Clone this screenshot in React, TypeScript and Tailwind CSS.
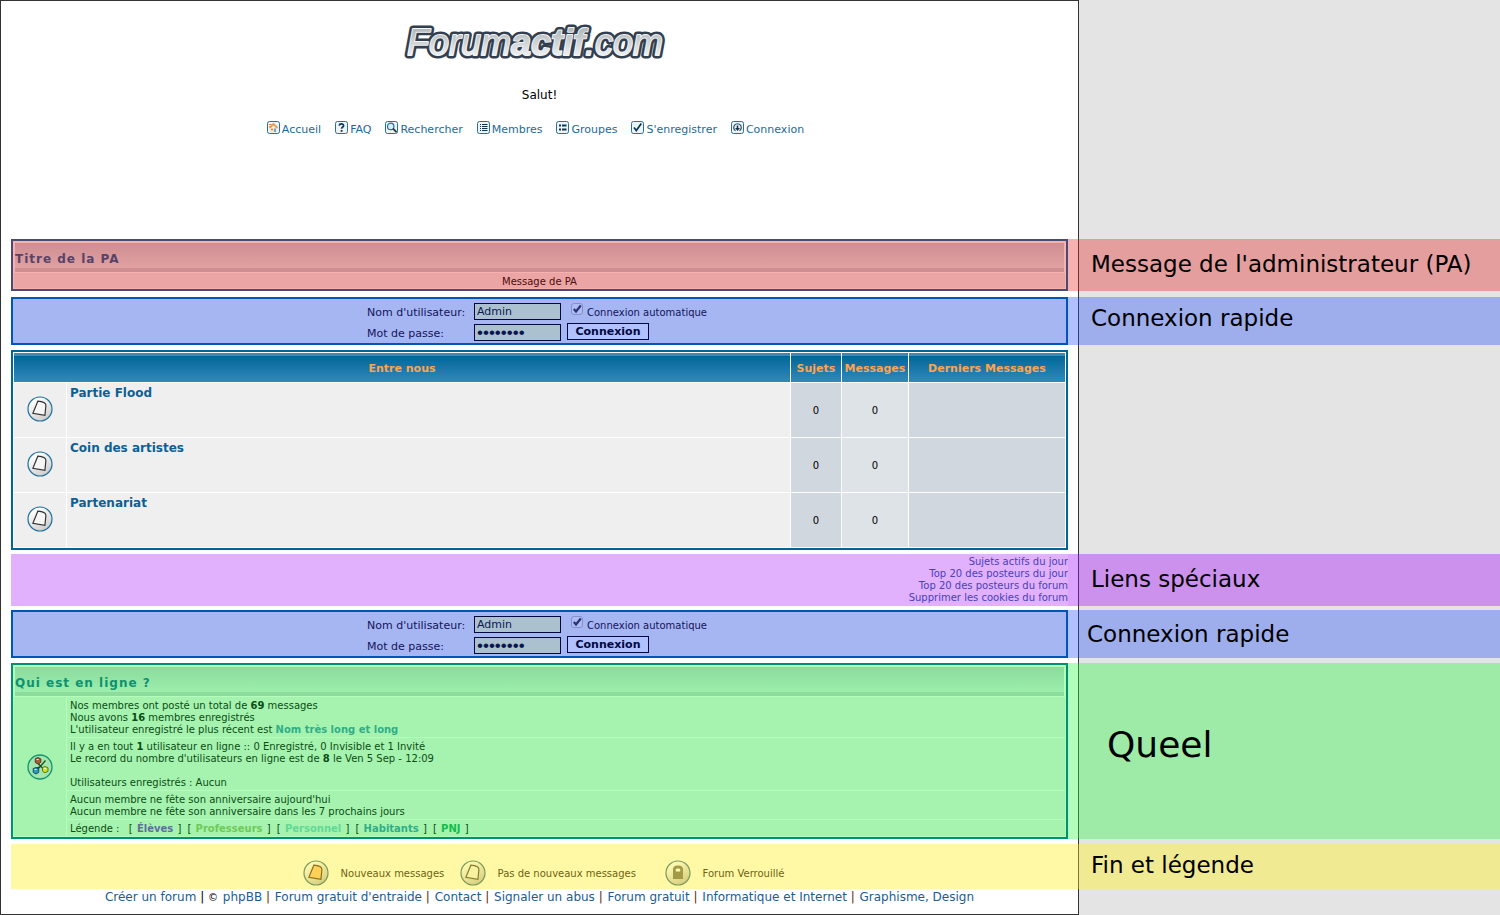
import { useId, type ReactNode } from "react";

const FONT = "font-['DejaVu_Sans',Verdana,sans-serif]";

type Tone = {
  strip: string;
  side: string;
};

const TONES = {
  none: { strip: "border-[#333333]", side: "" },
  red: { strip: "bg-[#f8b1b1] border-[#702f31]", side: "bg-[#e59e9e]" },
  blue: { strip: "bg-[#b1c0fe] border-[#2f3c7c]", side: "bg-[#9eadeb]" },
  purple: { strip: "bg-[#dda4ff] border-[#5a2a80]", side: "bg-[#cb91ec]" },
  green: { strip: "bg-[#b1ffba] border-[#2f7c38]", side: "bg-[#9eeba7]" },
  yellow: { strip: "bg-[#fff9a5] border-[#7c7730]", side: "bg-[#f0ea93]" },
} satisfies Record<string, Tone>;

function Band({
  tone = "none",
  label,
  labelClass = "pl-3 pb-0.5 text-[23px]",
  children,
}: {
  tone?: keyof typeof TONES;
  label?: string;
  labelClass?: string;
  children?: ReactNode;
}) {
  const t = TONES[tone];
  return (
    <section className="grid grid-cols-[1079fr_421fr]">
      <div className="flex min-w-0 border-l border-[#333333] bg-white pl-2.5">
        <div className="min-w-0 grow">{children}</div>
        <div className={`w-[11px] shrink-0 border-r ${t.strip}`} />
      </div>
      <div className={`flex items-center whitespace-nowrap text-black ${t.side} ${labelClass}`}>
        {label && <h2>{label}</h2>}
      </div>
    </section>
  );
}

function Gap({ size }: { size: string }) {
  return (
    <Band>
      <div className={size} />
    </Band>
  );
}

function LogoWords() {
  return (
    <>
      Forum<tspan fontWeight={700}>actif</tspan>.com
    </>
  );
}

function Logo() {
  const common = {
    x: 5,
    y: 38,
    fontFamily: "Liberation Sans, Arial, sans-serif",
    fontStyle: "italic",
    fontSize: 36,
    strokeLinejoin: "round" as const,
  };
  return (
    <svg width="272" height="50" viewBox="0 0 272 50" role="img" aria-label="Forumactif.com">
      <defs>
        <linearGradient id="logo-fill" x1="0" y1="0" x2="0" y2="1">
          <stop offset="0.2" stopColor="#b4babd" />
          <stop offset="0.8" stopColor="#eceeef" />
        </linearGradient>
      </defs>
      <text {...common} fill="#333f4e" stroke="#333f4e" strokeWidth="7"><LogoWords /></text>
      <text {...common} fill="#f4f5f6" stroke="#f4f5f6" strokeWidth="1.8"><LogoWords /></text>
      <text {...common} fill="url(#logo-fill)"><LogoWords /></text>
    </svg>
  );
}

function NavIcon({ children }: { children: ReactNode }) {
  return (
    <svg width="13" height="13" viewBox="0 0 13 13" fill="none" aria-hidden="true">
      <rect x="0.5" y="0.5" width="12" height="12" rx="2" fill="#eef3f6" stroke="#2b6f98" />
      {children}
    </svg>
  );
}

const NAV: { label: string; icon: ReactNode }[] = [
  {
    label: "Accueil",
    icon: (
      <>
        <path d="M2.500 7 6.500 3 10.500 7" stroke="#e89a50" strokeWidth="1.800" />
        <path d="M3.500 7h6v4h-6z" fill="#f9e3c0" />
        <path d="M7 7.500h2V11H7z" fill="#6aa6d0" />
        <path d="M2 3.500h2.500M2.500 5.500h1" stroke="#e0853a" />
        <path d="M4 8.500h2" stroke="#e0853a" strokeWidth="1.500" />
      </>
    ),
  },
  {
    label: "FAQ",
    icon: (
      <>
        <path d="M4.3 4.6C4.4 2.4 8.7 2.4 8.6 4.7 8.6 6 6.6 6 6.6 7.8" stroke="#16354d" strokeWidth="1.7" />
        <rect x="5.7" y="9" width="1.8" height="1.8" fill="#16354d" />
      </>
    ),
  },
  {
    label: "Rechercher",
    icon: (
      <>
        <circle cx="5.7" cy="5.4" r="3.2" fill="#d8efff" stroke="#2b6f98" strokeWidth="1.2" />
        <path d="m8 7.7 3.500 3.500" stroke="#16354d" strokeWidth="1.8" />
      </>
    ),
  },
  {
    label: "Membres",
    icon: (
      <path
        d="M3 3.500h1M5 3.500h5.500M3 5.500h1M5 5.500h5.500M3 7.500h1M5 7.500h5.500M3 9.500h1M5 9.500h5.500"
        stroke="#16354d"
      />
    ),
  },
  {
    label: "Groupes",
    icon: <path d="M3 4.500h2M6 4.500h4.500M3 8.500h2M6 8.500h4.500" stroke="#16354d" strokeWidth="2" />,
  },
  {
    label: "S'enregistrer",
    icon: <path d="M3 6.500 5.300 9.500 10.300 2.500" stroke="#16354d" strokeWidth="1.700" />,
  },
  {
    label: "Connexion",
    icon: (
      <>
        <path d="M4.500 9.800A3.800 3.800 0 1 1 8.500 9.800" stroke="#2b4f68" strokeWidth="1.200" />
        <path d="M6.500 4.500v3" stroke="#16354d" strokeWidth="1.600" />
        <path d="M4 7h5L6.500 10z" fill="#16354d" />
      </>
    ),
  },
];

function FolderIcon({
  ring = "#1f7099",
  top = "#ffffff",
  bottom = "#cfcfcf",
  paper = "#f6f6f6",
  ink = "#333333",
  locked = false,
}: {
  ring?: string;
  top?: string;
  bottom?: string;
  paper?: string;
  ink?: string;
  locked?: boolean;
}) {
  const id = useId();
  return (
    <svg className="shrink-0" width="26" height="26" viewBox="0 0 26 26" aria-hidden="true">
      <defs>
        <linearGradient id={id} x1="0" y1="0" x2="0.6" y2="1">
          <stop offset="0.2" stopColor={top} />
          <stop offset="1" stopColor={bottom} />
        </linearGradient>
      </defs>
      <circle cx="13" cy="13" r="12" fill={`url(#${id})`} stroke={ring} strokeWidth="1.2" />
      {locked ? (
        <>
          <path d="M8 9.500C8 7 9.500 5.500 13 5.500S18 7 18 9.500V19H8z" fill={ink} />
          <path d="M10.800 11.500V9.500C10.800 8 15.200 8 15.200 9.500V11.500z" fill={paper} />
        </>
      ) : (
        <path
          d="M10.800 5.200 5.900 17.400 17.900 19.400 18.900 9.500C18.900 7 16 5.500 10.800 5.200Z"
          fill={paper}
          stroke={ink}
          strokeWidth="1.200"
        />
      )}
    </svg>
  );
}

function OnlineIcon() {
  return (
    <svg width="26" height="26" viewBox="0 0 26 26" aria-hidden="true" className="mx-auto">
      <circle cx="13" cy="13" r="12" fill="#a2e6ad" stroke="#15936f" strokeWidth="1.300" />
      <path d="M11 15 18.500 6.500M11 9.500l6 6M8 15l4-2" stroke="#1c4a1c" strokeWidth="1.300" />
      <path d="m8.300 4.600 3-1 2.500 1.400v3.300L11.300 10 8.300 8.500z" fill="#b05a3c" stroke="#4d3a1c" />
      <path d="m6.200 14.500 2.800-1 2.700 1.300v3.600L9 20l-2.800-1.600z" fill="#279bc0" stroke="#14506a" />
      <path d="m15.500 13.500 2.500-1 3 1.300v3.500l-3 1.500-2.500-1.600z" fill="#c8e526" stroke="#5f7a14" />
      <path d="M9.500 5.500h2M17 14.500h2M7.500 15.500h2" stroke="#e8f5c8" />
    </svg>
  );
}

function QuickLogin() {
  const id = useId();
  const field = "h-[17px] w-[87px] border border-[#00083f] bg-[#abc1d0] px-0.5 leading-[15px] text-[#0b1650] outline-none";
  return (
    <form
      className="flex h-12 flex-col items-center justify-center gap-[3px] border-2 border-[#0055b8] bg-[#a6b6f3] pt-[3px] text-[11px] text-[#14145a]"
      onSubmit={(e) => e.preventDefault()}
    >
      <div className="flex w-[345px] items-center">
        <label htmlFor={`${id}u`} className="w-[107px] pt-0.5 leading-[15px] whitespace-nowrap">Nom d'utilisateur:</label>
        <input id={`${id}u`} className={`${field} pt-px text-[11px]`} type="text" defaultValue="Admin" />
        <span className="mb-1 ml-2.5 grid size-3 shrink-0">
          <input
            id={`${id}c`}
            type="checkbox"
            defaultChecked
            className="peer col-start-1 row-start-1 size-3 appearance-none rounded-[3px] border border-[#8590c8] bg-[#aebcf5]"
          />
          <svg
            className="pointer-events-none invisible col-start-1 row-start-1 peer-checked:visible"
            width="12"
            height="12"
            viewBox="0 0 12 12"
            aria-hidden="true"
          >
            <path d="M2.800 6 5 8.500 9.800 2.500" fill="none" stroke="#2a3472" strokeWidth="2.200" />
          </svg>
        </span>
        <label htmlFor={`${id}c`} className="pt-0.5 pl-1 text-[10px] leading-[15px] whitespace-nowrap">Connexion automatique</label>
      </div>
      <div className="flex w-[345px] items-center">
        <label htmlFor={`${id}p`} className="w-[107px] pt-0.5 leading-[15px] whitespace-nowrap">Mot de passe:</label>
        <input
          id={`${id}p`}
          className={`${field} font-['Liberation_Sans',Arial,sans-serif] text-[17px]`}
          type="password"
          defaultValue="password"
        />
        <button
          type="submit"
          className="mb-[3px] ml-1.5 h-[17px] w-[82px] border border-[#00083f] bg-[#b1c0fe] text-[11px] leading-[15px] font-bold text-[#00083f]"
        >
          Connexion
        </button>
      </div>
    </form>
  );
}

const FORUMS = ["Partie Flood", "Coin des artistes", "Partenariat"];

const HEAD =
  "h-[29px] border-t-3 border-[#4089b0] bg-linear-to-b from-[#006699] to-[#2d8aba] p-0 text-[11px] font-bold text-[#ffa34f]";

function ForumTable() {
  return (
    <table className="w-full table-fixed border-separate border-spacing-px border-2 border-[#006699] bg-white">
      <colgroup>
        <col className="w-[52px]" />
        <col />
        <col className="w-[50px]" />
        <col className="w-[66px]" />
        <col className="w-[156px]" />
      </colgroup>
      <thead>
        <tr>
          <th colSpan={2} className={HEAD}>Entre nous</th>
          <th className={HEAD}>Sujets</th>
          <th className={HEAD}>Messages</th>
          <th className={HEAD}>Derniers Messages</th>
        </tr>
      </thead>
      <tbody className="text-[10px] text-black">
        {FORUMS.map((name) => (
          <tr key={name}>
            <td className="h-[54px] bg-[#efefef] p-0">
              <div className="flex justify-center pb-0.5"><FolderIcon /></div>
            </td>
            <td className="bg-[#efefef] px-[3px] py-0.5 align-top text-[12px] leading-4 font-bold">
              <a href="#forum" className="text-[#0d6095]">{name}</a>
            </td>
            <td className="bg-[#d1d7de] p-0 text-center">0</td>
            <td className="bg-[#dee3e7] p-0 text-center">0</td>
            <td className="bg-[#d1d7de] p-0" />
          </tr>
        ))}
      </tbody>
    </table>
  );
}

const SPECIAL_LINKS = [
  "Sujets actifs du jour",
  "Top 20 des posteurs du jour",
  "Top 20 des posteurs du forum",
  "Supprimer les cookies du forum",
];

const GROUPS = [
  { name: "Élèves", color: "text-[#5f6f96]" },
  { name: "Professeurs", color: "text-[#6fc957]" },
  { name: "Personnel", color: "text-[#62d897]" },
  { name: "Habitants", color: "text-[#2fae88]" },
  { name: "PNJ", color: "text-[#12bd4c]" },
];

function OnlineTable() {
  const cell = "bg-[#a6f3b0] px-[3px] pt-[3px] pb-px leading-3";
  return (
    <table className="w-full table-fixed border-separate border-spacing-px border-2 border-[#00926f] bg-[#b1ffba] text-[10px] text-[#0b4d13]">
      <colgroup>
        <col className="w-[52px]" />
        <col />
      </colgroup>
      <thead>
        <tr>
          <th
            colSpan={2}
            className="border border-b-0 border-[#b1ffba] p-0 text-left text-[12px] font-bold tracking-[1px] text-[#0d9170]"
          >
            <div className="h-[29px] border-b-4 border-[#8bdc9d] bg-linear-to-b from-[#8bdc9d] to-[#9ceeac] pt-0.5 leading-7">
              Qui est en ligne ?
            </div>
          </th>
        </tr>
      </thead>
      <tbody>
        <tr>
          <td rowSpan={4} className="bg-[#a6f3b0] p-0"><OnlineIcon /></td>
          <td className={cell}>
            Nos membres ont posté un total de <b>69</b> messages
            <br />
            Nous avons <b>16</b> membres enregistrés
            <br />
            L'utilisateur enregistré le plus récent est{" "}
            <a href="#membre" className="font-bold text-[#2fae88]">Nom très long et long</a>
          </td>
        </tr>
        <tr>
          <td className={cell}>
            Il y a en tout <b>1</b> utilisateur en ligne :: 0 Enregistré, 0 Invisible et 1 Invité
            <br />
            Le record du nombre d'utilisateurs en ligne est de <b>8</b> le Ven 5 Sep - 12:09
            <br />
            <br />
            Utilisateurs enregistrés : Aucun
          </td>
        </tr>
        <tr>
          <td className={cell}>
            Aucun membre ne fête son anniversaire aujourd'hui
            <br />
            Aucun membre ne fête son anniversaire dans les 7 prochains jours
          </td>
        </tr>
        <tr>
          <td className={cell}>
            Légende :&nbsp;
            {GROUPS.map((g) => (
              <span key={g.name} className="ml-[3px]">
                {" "}[ <a href="#groupe" className={`mx-px font-bold ${g.color}`}>{g.name}</a> ]
              </span>
            ))}
          </td>
        </tr>
      </tbody>
    </table>
  );
}

const FOOTER = [
  "Forum gratuit d'entraide",
  "Contact",
  "Signaler un abus",
  "Forum gratuit",
  "Informatique et Internet",
  "Graphisme, Design",
];

export default function App() {
  return (
    <main className={`bg-[#e4e4e4] text-black ${FONT}`}>
      <div className="grid grid-cols-[1079fr_421fr]">
        <header className="flex h-[239px] flex-col items-center border-x border-t border-[#333333] bg-white pt-4">
          <a href="#accueil" className="pr-1"><Logo /></a>
          <p className="mt-5 text-[12px] leading-4">Salut!</p>
          <nav className="mt-4 flex gap-3.5 pt-0.5 pr-2 text-[11px] leading-4 text-[#1d6a99]">
            {NAV.map((item) => (
              <a key={item.label} href="#menu" className="flex gap-0.5">
                <NavIcon>{item.icon}</NavIcon>
                <span className="pt-px">{item.label}</span>
              </a>
            ))}
          </nav>
        </header>
      </div>

      <Band tone="red" label="Message de l'administrateur (PA)">
        <div className="border-2 border-[#4a4a75] bg-[#f8b1b1] p-px">
          <h1 className="mx-px mt-px h-[29px] border-b-4 border-[#cf8f92] bg-linear-to-b from-[#cf8f92] to-[#e1a0a2] pt-0.5 text-[12px] leading-7 font-bold tracking-[1px] text-[#574367]">
            Titre de la PA
          </h1>
          <p className="mt-px h-[15px] bg-[#eba5a5] text-center text-[10px] leading-[17px] text-[#4d0c0c]">
            Message de PA
          </p>
        </div>
      </Band>
      <Gap size="h-1.5" />
      <Band tone="blue" label="Connexion rapide" labelClass="pl-3 pb-1.5 text-[23px]">
        <QuickLogin />
      </Band>
      <Gap size="h-[5px]" />
      <Band>
        <ForumTable />
      </Band>
      <Gap size="h-1" />
      <Band tone="purple" label="Liens spéciaux">
        <ul className="bg-[#e1b1fe] py-0.5 text-right text-[10px] leading-3 text-[#4a40b8]">
          {SPECIAL_LINKS.map((link) => (
            <li key={link}><a href="#liens">{link}</a></li>
          ))}
        </ul>
      </Band>
      <Gap size="h-1" />
      <Band tone="blue" label="Connexion rapide" labelClass="pl-2 text-[23px]">
        <QuickLogin />
      </Band>
      <Gap size="h-[5px]" />
      <Band tone="green" label="Queel" labelClass="pl-7 pb-3 text-[36px]">
        <OnlineTable />
      </Band>
      <Gap size="h-[5px]" />
      <Band tone="yellow" label="Fin et légende">
        <ul className="flex h-[45px] items-end justify-center bg-[#fff9a5] pb-[3px] pl-2 text-[10px] text-[#6e6414]">
          <li className="flex w-[157px] items-center gap-3 whitespace-nowrap">
            <FolderIcon ring="#7a9a5c" top="#fffab0" bottom="#d8d080" paper="#ffd257" ink="#8a7020" />
            Nouveaux messages
          </li>
          <li className="flex w-[205px] items-center gap-3 whitespace-nowrap">
            <FolderIcon ring="#7a9a5c" top="#fffab0" bottom="#d8d080" paper="#f8f2a0" ink="#857d30" />
            Pas de nouveaux messages
          </li>
          <li className="flex items-center gap-3 whitespace-nowrap">
            <FolderIcon ring="#7a9a5c" top="#fffab0" bottom="#d8d080" paper="#fffab0" ink="#a39a48" locked />
            Forum Verrouillé
          </li>
        </ul>
      </Band>
      <div className="grid grid-cols-[1079fr_421fr]">
        <footer className="h-[26px] border-x border-b border-[#333333] bg-white text-center text-[12px] leading-4 whitespace-nowrap text-[#1b5c93]">
          <a href="#creer">Créer un forum</a>
          <span className="mr-px text-black"> | <span className="text-[10px]">©</span> </span>
          <a href="#phpbb">phpBB</a>
          {FOOTER.map((link) => (
            <span key={link}>
              <span className="mr-px text-[#5c2c00]"> | </span>
              <a href="#pied">{link}</a>
            </span>
          ))}
        </footer>
      </div>
    </main>
  );
}
